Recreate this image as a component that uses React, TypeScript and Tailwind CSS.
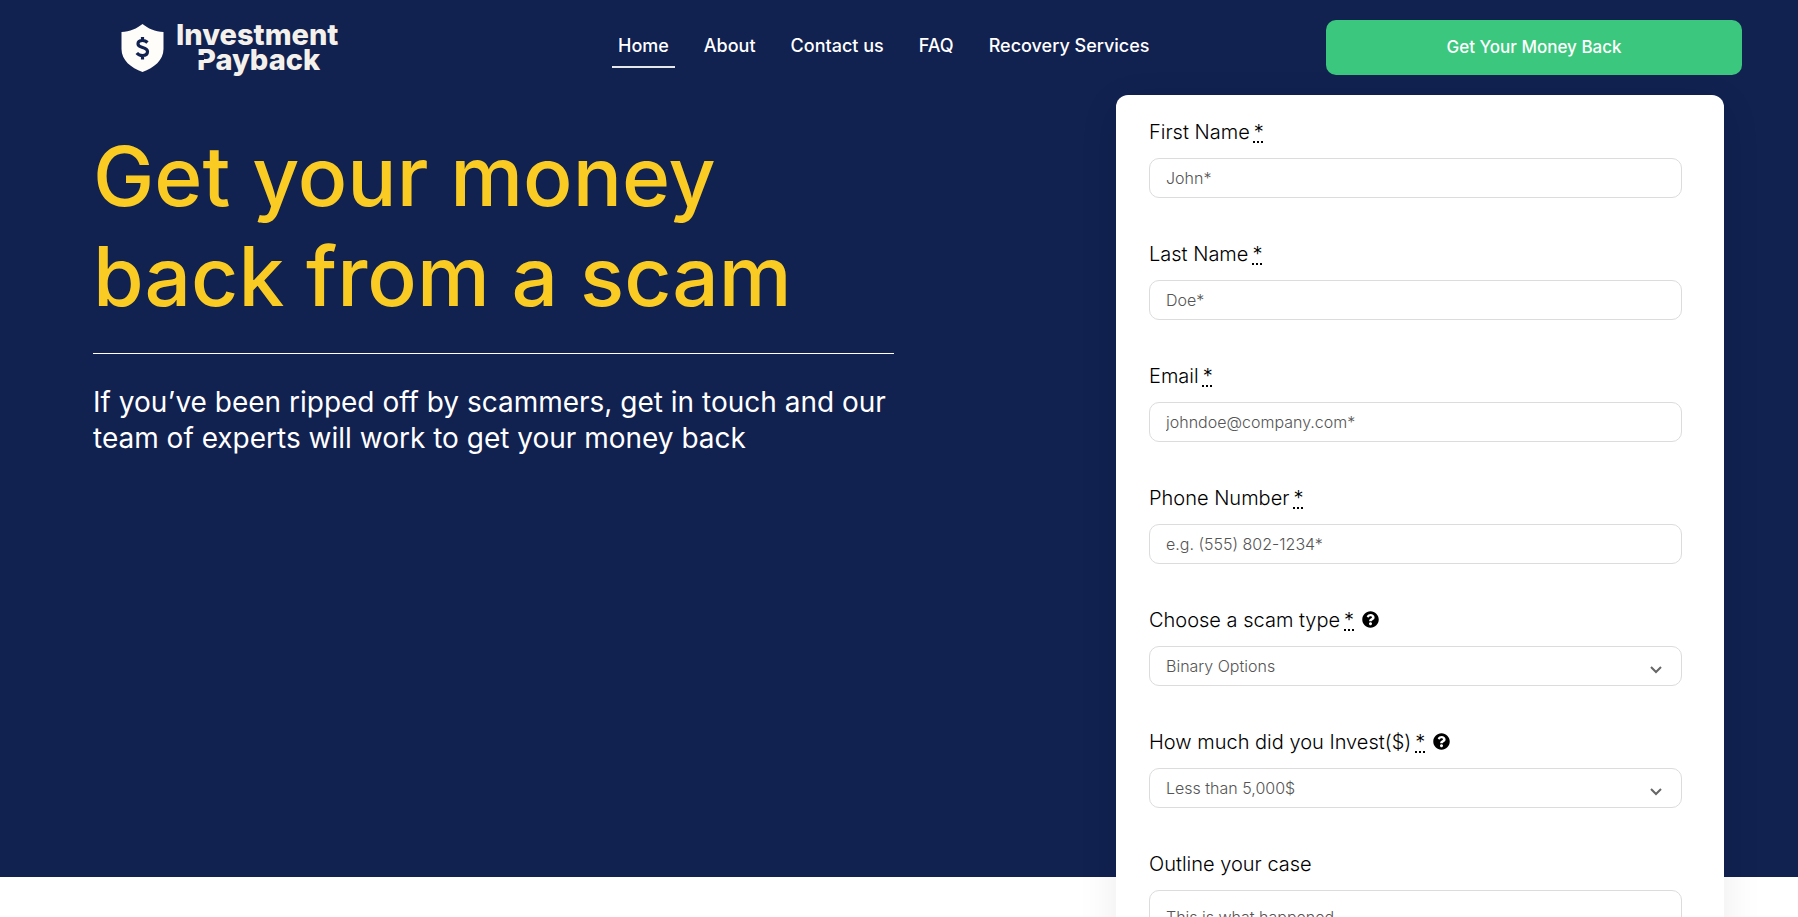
import { FaQuestionCircle } from "react-icons/fa";

interface FieldLabelProps {
  id: string;
  text: string;
  required?: boolean;
  help?: boolean;
}

interface TextFieldProps {
  id: string;
  label: string;
  type: string;
  placeholder: string;
}

interface SelectFieldProps {
  id: string;
  label: string;
  option: string;
}

const navLinks = ["Home", "About", "Contact us", "FAQ", "Recovery Services"];

const textFields: TextFieldProps[] = [
  { id: "first-name", label: "First Name", type: "text", placeholder: "John*" },
  { id: "last-name", label: "Last Name", type: "text", placeholder: "Doe*" },
  {
    id: "email",
    label: "Email",
    type: "email",
    placeholder: "johndoe@company.com*",
  },
  {
    id: "phone",
    label: "Phone Number",
    type: "tel",
    placeholder: "e.g. (555) 802-1234*",
  },
];

const selectFields: SelectFieldProps[] = [
  { id: "scam-type", label: "Choose a scam type", option: "Binary Options" },
  {
    id: "amount",
    label: "How much did you Invest($)",
    option: "Less than 5,000$",
  },
];

function Logo() {
  return (
    <svg
      className="overflow-visible"
      width="240"
      height="55"
      viewBox="0 0 240 55"
      role="img"
    >
      <path
        d="M21.500 4C27 8.500 34 11.500 42.500 12V29C42.500 40 33 48 21.500 52C10 48 0.500 40 0.500 29V12C9 11.500 16 8.500 21.500 4Z"
        fill="#fffdfa"
      />
      {/* dollar sign */}
      <path
        d="M26.500 22.500C25 21 23.500 20.500 21.500 20.500C18.500 20.500 17 22 17 24C17 28.500 26.500 26.500 26.500 31.500C26.500 34 24.500 35.500 21.500 35.500C19 35.500 17 34.500 15.800 33M21.500 17V20.500M21.500 35.500V39.500"
        fill="none"
        stroke="#112150"
        strokeWidth="3.200"
      />
      <g
        fill="#f4f1ec"
        fontFamily="Inter, sans-serif"
        fontWeight="800"
        fontSize="29"
      >
        <text x="55" y="25">
          Investment
        </text>
        <text x="76" y="50">
          Payback
        </text>
      </g>
      {/* notch in the stem of the P */}
      <rect x="76" y="35" width="7" height="5" fill="#112150" />
    </svg>
  );
}

function Header() {
  return (
    <header className="grid grid-cols-[491fr_714fr_416fr] py-5 pr-14 pl-[121px]">
      <a href="#" aria-label="Investment Payback">
        <Logo />
      </a>
      <nav className="flex items-start gap-[23px] pt-2 text-lg font-medium text-white">
        {navLinks.map((link) => (
          <a
            key={link}
            href="#"
            className={
              link === "Home"
                ? "border-b-2 border-gray-200 px-1.5 pt-1 pb-1.5 leading-7"
                : "px-1.5 pt-1 pb-1.5 leading-7"
            }
          >
            {link}
          </a>
        ))}
      </nav>
      <button className="h-[55px] rounded-[10px] bg-[#3cc77e] text-[17px] font-medium text-white">
        Get Your Money Back
      </button>
    </header>
  );
}

function FieldLabel(props: FieldLabelProps) {
  return (
    <label
      htmlFor={props.id}
      className="mb-3 flex items-center text-xl leading-7 font-light text-black"
    >
      {props.text}
      {props.required && (
        <abbr
          title="required"
          className="ml-1 underline decoration-dotted decoration-2 underline-offset-2"
        >
          *
        </abbr>
      )}
      {props.help && <FaQuestionCircle className="mb-0.5 ml-2 size-[17px]" />}
    </label>
  );
}

function TextField(props: TextFieldProps) {
  return (
    <div>
      <FieldLabel id={props.id} text={props.label} required />
      <input
        id={props.id}
        type={props.type}
        placeholder={props.placeholder}
        className="block h-10 w-full rounded-[10px] border border-[#dcdcdc] bg-white px-4 text-base font-light placeholder:text-[#555]"
      />
    </div>
  );
}

function SelectField(props: SelectFieldProps) {
  return (
    <div>
      <FieldLabel id={props.id} text={props.label} required help />
      <div className="relative">
        <select
          id={props.id}
          className="block h-10 w-full appearance-none rounded-[10px] border border-[#dcdcdc] bg-white px-4 text-base font-light text-[#555]"
        >
          <option>{props.option}</option>
        </select>
        <svg
          className="pointer-events-none absolute top-5 right-5"
          width="12"
          height="8"
          viewBox="0 0 12 8"
          fill="none"
          stroke="#666"
          strokeWidth="2"
        >
          <path d="M1 1L6 6L11 1" />
        </svg>
      </div>
    </div>
  );
}

function CaseForm() {
  return (
    <form className="-mb-[165px] flex flex-col gap-[42px] rounded-xl bg-white pt-[23px] pr-[42px] pb-8 pl-[33px] shadow-[0_10px_40px_rgba(0,0,0,0.08)]">
      {textFields.map((field) => (
        <TextField key={field.id} {...field} />
      ))}
      {selectFields.map((field) => (
        <SelectField key={field.id} {...field} />
      ))}
      <div>
        <FieldLabel id="outline" text="Outline your case" />
        <textarea
          id="outline"
          placeholder="This is what happened"
          className="block h-[120px] w-full rounded-[10px] border border-[#dcdcdc] bg-white px-4 py-3.5 text-base font-light placeholder:text-[#555]"
        />
      </div>
    </form>
  );
}

export default function App() {
  return (
    <div className="min-h-screen bg-white font-[Inter,sans-serif]">
      <div className="bg-[#112150]">
        <Header />
        <main className="grid grid-cols-[801fr_608fr] gap-[222px] pr-[74px] pl-[93px]">
          <section className="pt-8">
            <h1 className="text-[82px] leading-[100px] font-medium text-[#f9cb23]">
              Get your money
              <br />
              back from a scam
            </h1>
            <hr className="mt-[26px] border-white" />
            <p className="mt-[30px] text-[28px] leading-9 text-white">
              If you’ve been ripped off by scammers, get in touch and our team
              of experts will work to get your money back
            </p>
          </section>
          <CaseForm />
        </main>
      </div>
    </div>
  );
}
